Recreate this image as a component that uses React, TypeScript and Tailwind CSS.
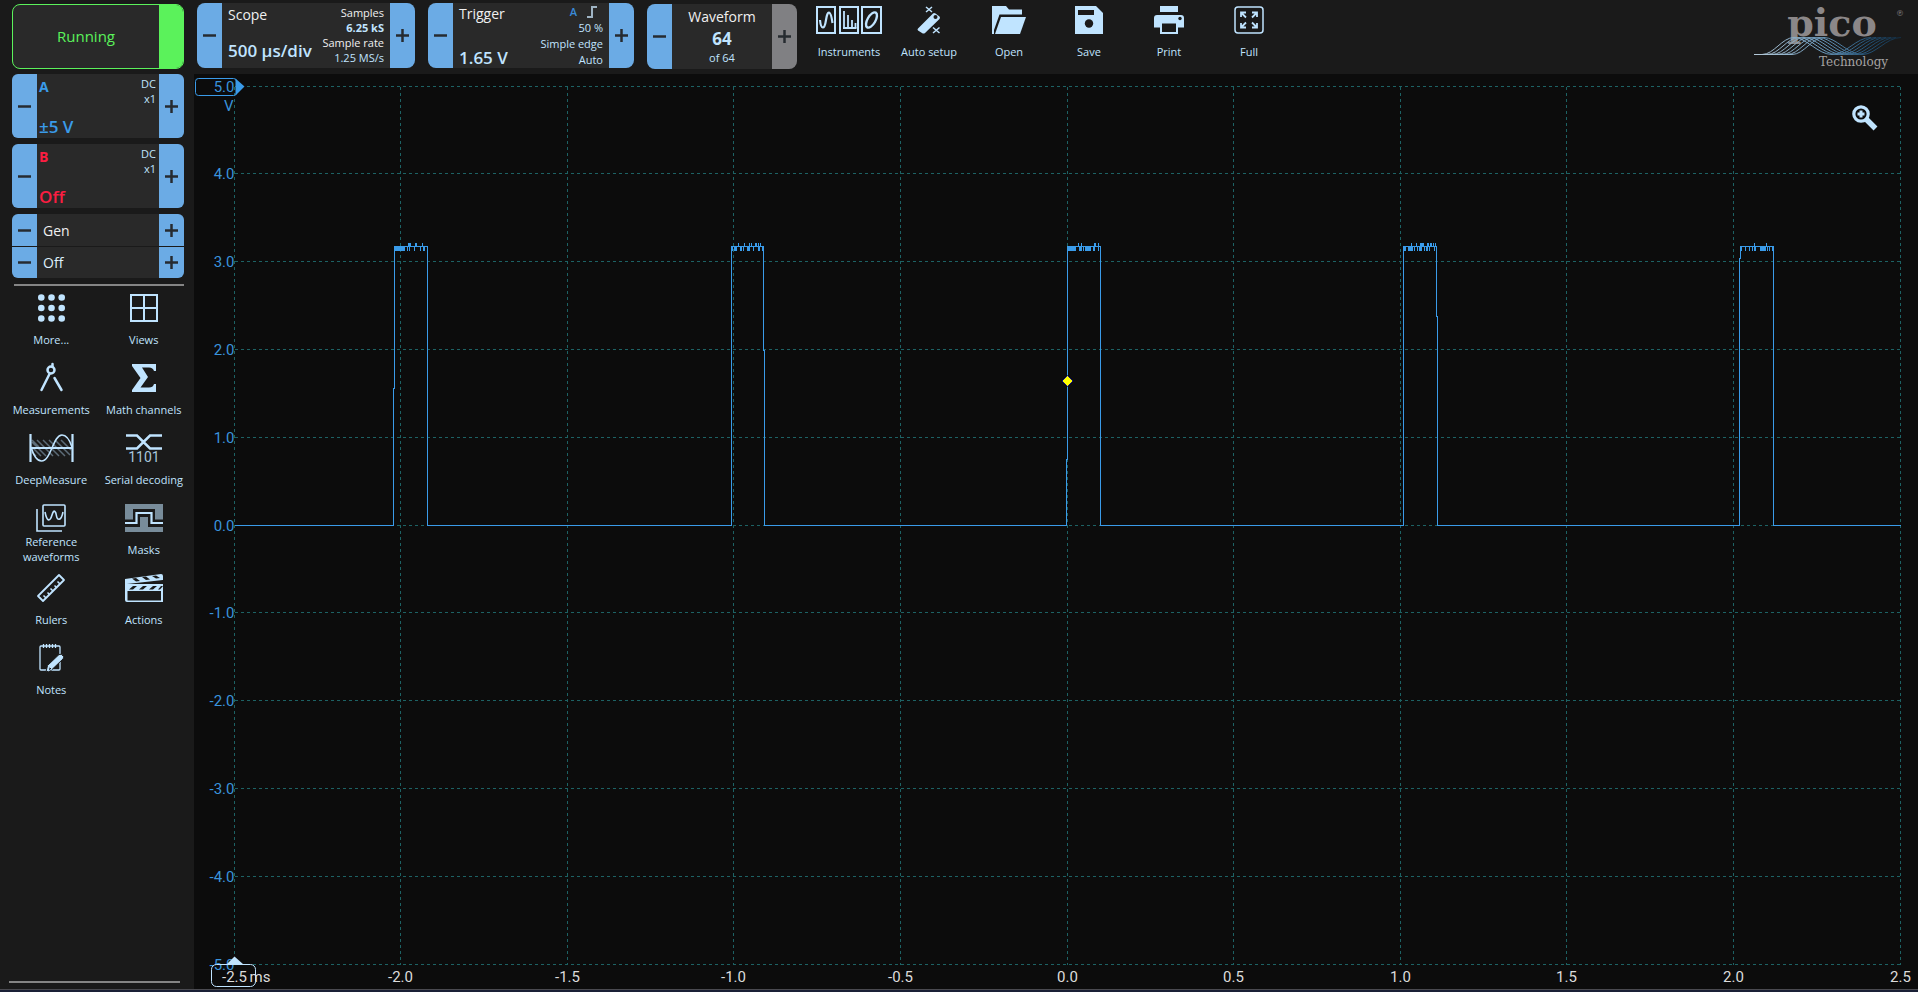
import { useLayoutEffect, useRef, useState } from "react";
import type { ReactNode } from "react";

const ACCENT = "#c0e4ff";
const PANEL = "#1a1a1a";

/* ---------- icons ---------- */

function Icon({ w, children }: { w: number; children: ReactNode }) {
  return (
    <svg
      width={w}
      height={28}
      viewBox={`0 0 ${w} 28`}
      fill="none"
      stroke={ACCENT}
      strokeWidth={2}
      className="overflow-visible"
      aria-hidden="true"
    >
      {children}
    </svg>
  );
}

const InstrumentsIcon = () => (
  <Icon w={66}>
    <rect x="1" y="1" width="18" height="26" />
    <rect x="24" y="1" width="18" height="26" />
    <rect x="46" y="1" width="19" height="26" />
    <path d="M4 14C5 24 8.500 24 10 14S14.500 3 16.500 17" strokeWidth="2.200" />
    <path d="M28 5V22M32 9V22M36 14V22M39.500 17V22" strokeWidth="1.800" />
    <path d="M27 22H40.500" />
    <ellipse cx="55.500" cy="14" rx="4" ry="8.500" transform="rotate(30 55.500 14)" strokeWidth="2.400" />
  </Icon>
);

const AutoSetupIcon = () => (
  <Icon w={24}>
    <path d="M1 22.500 16 7.500Q17 6.500 18.500 7.500L22.500 10.500Q23.500 11.500 22.500 13L8 27Q6.500 28 5 27L1 24.500Q0 23.500 1 22.500z" fill={ACCENT} stroke="none" />
    <circle cx="18.500" cy="11" r="2" fill={PANEL} stroke="none" />
    <path d="M9 1 15 6M15 1 9 6M16 21.500 22.500 27M22.500 21.500 16 27" strokeWidth="1.500" />
  </Icon>
);

const OpenIcon = () => (
  <Icon w={34}>
    <path d="M0 28V0H14L17 3.500H30V8.500H7.500L2 24V28z" fill={ACCENT} stroke="none" />
    <path d="M9 11H34L28 28H3z" fill={ACCENT} stroke="none" />
  </Icon>
);

const SaveIcon = () => (
  <Icon w={28}>
    <path d="M0 0H21L28 7V28H0z" fill={ACCENT} stroke="none" />
    <rect x="3" y="4" width="16" height="5" fill={PANEL} stroke="none" />
    <circle cx="14" cy="17.500" r="4.200" fill={PANEL} stroke="none" />
  </Icon>
);

const PrintIcon = () => (
  <Icon w={30}>
    <rect x="6" y="0" width="18" height="6" fill={ACCENT} stroke="none" />
    <path d="M3 9H27Q30 9 30 12V21.500H24V28H6V21.500H0V12Q0 9 3 9z" fill={ACCENT} stroke="none" />
    <rect x="8" y="17.500" width="14" height="8.500" fill={PANEL} stroke="none" />
    <circle cx="26" cy="12.500" r="1.700" fill={PANEL} stroke="none" />
  </Icon>
);

const FullIcon = () => (
  <Icon w={30}>
    <rect x="1" y="1" width="28" height="26" rx="3" strokeWidth="1.500" />
    <path d="M7 11V6.500H12M7.500 7 12 11.500M18 6.500H23V11M22.500 7 18 11.500M7 17V21.500H12M7.500 21 12 16.500M23 17V21.500H18M22.500 21 18 16.500" strokeWidth="1.800" />
  </Icon>
);

const MoreIcon = () => (
  <Icon w={27}>
    {[3.5, 14, 24.5].map((y) =>
      [3.3, 13.5, 23.7].map((x) => <circle key={`${x}-${y}`} cx={x} cy={y} r="3.300" fill={ACCENT} stroke="none" />)
    )}
  </Icon>
);

const ViewsIcon = () => (
  <Icon w={28}>
    <path d="M1 1H27V27H1zM14 1V27M1 14H27" />
  </Icon>
);

const MeasurementsIcon = () => (
  <Icon w={23}>
    <circle cx="11" cy="6" r="3.500" strokeWidth="2.500" />
    <path d="M12.500 0V3M9.500 10 1.500 26" strokeWidth="2.500" strokeLinecap="round" />
    <path d="M14.500 14 21.500 26" strokeWidth="2.500" strokeLinecap="round" />
  </Icon>
);

const MathIcon = () => (
  <Icon w={24}>
    <path
      d="M0 0H24V7H22Q21 3.500 17 3.500H10L16 13 8.500 23.500H17Q21 23.500 22 20H24V28H0V26L8.500 14 0 2z"
      fill={ACCENT}
      stroke="none"
    />
  </Icon>
);

const DeepMeasureIcon = () => (
  <Icon w={45}>
    <path
      d="M3 6 10 13M8 6 24 22M14 6 30 22M20 6 36 22M3 13 12 22M3 18 7 22M26 6 41 21M3 8 17 22M32 6 42 16"
      stroke="#5c6c78"
      strokeWidth="1.500"
    />
    <path d="M1.500 0V28M43.500 0V28M2 14H43" strokeWidth="2.200" />
    <path d="M2 13C5 23 8 27 12.500 27 22 27 24 1 33 1 38 1 41 7 43 13" strokeWidth="1.600" />
  </Icon>
);

const SerialIcon = () => (
  <Icon w={36}>
    <path d="M0 1.500H11L24 14.500H36M0 14.500H11L24 1.500H36" strokeWidth="2.500" />
    <text x="18" y="28" textAnchor="middle" fill="#a9c6dc" stroke="none" className="font-['Roboto',sans-serif] text-[14px]">
      1101
    </text>
  </Icon>
);

const ReferenceIcon = () => (
  <Icon w={30}>
    <rect x="7" y="1" width="22" height="21" rx="1" strokeWidth="1.600" />
    <path d="M1 5V27H26" strokeWidth="1.600" />
    <path d="M9 8C11 18 14 18 16 11S20 8 20.500 12 25 18 27 8" strokeWidth="1.600" />
  </Icon>
);

const MasksIcon = () => (
  <Icon w={38}>
    <path d="M0 0H38V15.500H30V5H8V15.500H0zM0 28V23H15V13H23V23H38V28z" fill="#788c9a" stroke="none" />
    <path d="M0 19H11.500V9H26.500V19H38" strokeWidth="2.200" />
  </Icon>
);

const RulersIcon = () => (
  <Icon w={28}>
    <path d="M22 1 27 6 6 27 1 22z" strokeWidth="1.800" strokeLinejoin="round" />
    <path d="M9 24 6.500 21.500M12.500 20.500 10.500 18.500M16 17 13.500 14.500M19.500 13.500 17.500 11.500M23 10 20.500 7.500" strokeWidth="1.500" />
  </Icon>
);

const ActionsIcon = () => (
  <Icon w={38}>
    <path d="M0 5 36 0Q38 0 38 2V6L2 10H38V28H2Q0 28 0 26z" fill={ACCENT} stroke="none" />
    <rect x="2.500" y="17" width="33.500" height="9.500" fill={PANEL} stroke="none" />
    <path
      d="M7 4.500 11 4 15 7 11 7.500zM17 3 21 2.500 25 5.500 21 6zM27 2 31 1.500 35 4 31 4.500zM8 12H12L8 15.500H4zM18 12H22L18 15.500H14zM28 12H32L28 15.500H24zM36 12H38L35 15.500H33z"
      fill={PANEL}
      stroke="none"
    />
    <path d="M10 10 38 6.800V9.500H14z" fill={PANEL} stroke="none" />
  </Icon>
);

const NotesIcon = () => (
  <Icon w={25}>
    <rect x="1" y="2" width="20" height="24" rx="1" strokeWidth="1.300" />
    <path d="M4.500 0V4M7.500 0V4M10.500 0V4M13.500 0V4M16.500 0V4" strokeWidth="1.300" />
    <path d="M7 28 8.500 21.500 20 10.500Q22.500 9 24.500 12.500 25 14 24 15L12.500 26z" fill={ACCENT} stroke={PANEL} strokeWidth="1" />
    <path d="M9 27 10.500 22.500 13 25z" fill={PANEL} stroke={ACCENT} strokeWidth="1" />
  </Icon>
);

const ZoomIcon = () => (
  <svg width={26} height={26} viewBox="0 0 26 26" fill="none" stroke={ACCENT} aria-hidden="true">
    <circle cx="9" cy="9" r="7.200" strokeWidth="3.200" />
    <path d="M9 5.500V12.500M5.500 9H12.500" strokeWidth="3" />
    <path d="M14 14 23.500 23.500" strokeWidth="5.500" />
  </svg>
);

const EdgeIcon = () => (
  <svg width={10} height={12} viewBox="0 0 10 12" fill="none" stroke="#9fb4c4" strokeWidth={2} aria-hidden="true">
    <path d="M0 11H5V1H10" />
  </svg>
);

function PicoLogo() {
  return (
    <svg width={152} height={70} viewBox="0 0 152 70" className="overflow-visible" role="img" aria-label="Pico Technology">
      <defs>
        <linearGradient id="wave" gradientUnits="userSpaceOnUse" x1="0" y1="0" x2="150" y2="0">
          <stop offset="0" stopColor="#b5c9d8" />
          <stop offset="0.450" stopColor="#6d9bbd" />
          <stop offset="0.750" stopColor="#25557a" />
          <stop offset="1" stopColor="#10293d" />
        </linearGradient>
      </defs>
      <text x="78" y="33" textAnchor="middle" fill="#8b8788" className="font-['DejaVu_Serif',serif] text-[38px] font-bold">
        pico
      </text>
      <text x="142" y="13" fill="#8b8788" className="font-['DejaVu_Serif',serif] text-[8px]">®</text>
      {[0, 5, 10, 15, 20, 25, 30].map((s) => (
        <path
          key={s}
          d={`M0 51.500H${8 + s}C${20 + s} 51.500 ${28 + s} 34.500 ${40 + s} 34.500S${64 + s} 51.500 ${78 + s} 51.500 ${102 + s} 34.500 ${117 + s} 34.500`}
          fill="none"
          stroke="url(#wave)"
        />
      ))}
      <text x="65" y="63" fill="#a5a3a3" className="font-['DejaVu_Serif',serif] text-[12px]">
        Technology
      </text>
    </svg>
  );
}

/* ---------- controls ---------- */

interface StepButtonProps {
  sign: "plus" | "minus";
  label: string;
  disabled?: boolean;
}

function StepButton({ sign, label, disabled }: StepButtonProps) {
  return (
    <button
      type="button"
      aria-label={label}
      disabled={disabled}
      className={`w-[25px] shrink-0 flex items-center justify-center ${disabled ? "bg-[#808083]" : "bg-[#6babe5]"}`}
    >
      <svg width={13} height={13} viewBox="0 0 13 13" stroke="#262b30" strokeWidth={2.5} aria-hidden="true">
        <path d={sign === "plus" ? "M0 6.500H13M6.500 0V13" : "M0 6.500H13"} />
      </svg>
    </button>
  );
}

function Stepper({ name, className, locked, children }: { name: string; className: string; locked?: boolean; children: ReactNode }) {
  return (
    <div className={`flex overflow-hidden bg-[#292929] ${className}`}>
      <StepButton sign="minus" label={`${name} down`} />
      <div className="flex-1 min-w-0 flex justify-between">{children}</div>
      <StepButton sign="plus" label={`${name} up`} disabled={locked} />
    </div>
  );
}

function Channel({ name, range, color }: { name: string; range: string; color: string }) {
  return (
    <Stepper name={`Channel ${name}`} className="h-16 rounded-md mb-1.5">
      <div className={`flex flex-col justify-between pt-[3px] pb-px pl-0.5 leading-5 ${color}`}>
        <span className="text-[14px] font-bold">{name}</span>
        <span className="text-[17px] font-semibold">{range}</span>
      </div>
      <div className="pt-0.5 pr-[3px] text-right text-[11px] leading-[15px] text-[#c0e4ff]">
        <p>DC</p>
        <p>x1</p>
      </div>
    </Stepper>
  );
}

const tools = [
  { name: "More...", icon: MoreIcon },
  { name: "Views", icon: ViewsIcon },
  { name: "Measurements", icon: MeasurementsIcon },
  { name: "Math channels", icon: MathIcon },
  { name: "DeepMeasure", icon: DeepMeasureIcon },
  { name: "Serial decoding", icon: SerialIcon },
  { name: "Reference waveforms", icon: ReferenceIcon },
  { name: "Masks", icon: MasksIcon },
  { name: "Rulers", icon: RulersIcon },
  { name: "Actions", icon: ActionsIcon },
  { name: "Notes", icon: NotesIcon },
];

function Sidebar() {
  return (
    <aside className="w-[194px] shrink-0 pt-1 pb-1.5 flex flex-col">
      <div className="w-[172px] ml-3">
        <button
          type="button"
          className="w-full h-[65px] mb-[5px] flex overflow-hidden rounded-lg border border-[#5bf25b] bg-[#292929] text-[15px] text-[#5bf25b]"
        >
          <span className="flex-1 self-center">Running</span>
          <span className="w-6 self-stretch bg-[#5bf25b]" />
        </button>

        <Channel name="A" range="±5 V" color="text-[#3a9be9]" />
        <Channel name="B" range="Off" color="text-[#fb1d41]" />

        <div className="mb-1.5 overflow-hidden rounded-md text-[14px] text-[#dff0fc]">
          <Stepper name="Generator" className="h-[33px] border-b border-[#1a1a1a]">
            <span className="self-center pl-1.5 text-[#f0f0f0]">Gen</span>
          </Stepper>
          <Stepper name="Generator output" className="h-[31px]">
            <span className="self-center pl-1.5">Off</span>
          </Stepper>
        </div>
      </div>

      <hr className="ml-3.5 mr-2.5 border-t-2 border-[#858585]" />

      <nav className="grid grid-cols-2 pt-1 pl-[5px] pr-1">
        {tools.map((tool) => {
          const ToolIcon = tool.icon;
          return (
            <button key={tool.name} type="button" className="h-[70px] pt-1 flex flex-col items-center text-[#c0e4ff]">
              <ToolIcon />
              <span className="mt-0.5 h-[30px] flex items-center justify-center text-[11px] leading-[15px]">
                {tool.name}
              </span>
            </button>
          );
        })}
      </nav>

      <hr className="mt-auto ml-[9px] mr-3.5 border-t-2 border-[#858585]" />
    </aside>
  );
}

const actions = [
  { name: "Instruments", icon: InstrumentsIcon },
  { name: "Auto setup", icon: AutoSetupIcon },
  { name: "Open", icon: OpenIcon },
  { name: "Save", icon: SaveIcon },
  { name: "Print", icon: PrintIcon },
  { name: "Full", icon: FullIcon },
];

function Toolbar() {
  return (
    <header className="h-[74px] shrink-0 pt-[3px] pl-[3px] pr-3 flex items-start text-[#c0e4ff]">
      <Stepper name="Timebase" className="w-[218px] h-[65px] rounded-lg">
        <div className="flex flex-col justify-between pt-0.5 pb-[7px] pl-1.5 leading-5 whitespace-nowrap">
          <span className="text-[14px] text-[#f0f0f0]">Scope</span>
          <span className="text-[17px] font-semibold">500 µs/div</span>
        </div>
        <div className="pt-0.5 pr-1.5 text-right text-[11px] leading-[15px] whitespace-nowrap">
          <p className="text-[#f0f0f0]">Samples</p>
          <p className="font-bold">6.25 kS</p>
          <p className="text-[#f0f0f0]">Sample rate</p>
          <p>1.25 MS/s</p>
        </div>
      </Stepper>

      <Stepper name="Trigger level" className="w-[206px] h-[65px] ml-[13px] rounded-lg">
        <div className="flex flex-col justify-between pt-px pl-1.5 leading-5 whitespace-nowrap">
          <span className="text-[14px] text-[#f0f0f0]">Trigger</span>
          <span className="text-[17px] font-semibold">1.65 V</span>
        </div>
        <div className="pt-px pr-1.5 text-right text-[11px] leading-4 whitespace-nowrap">
          <p className="flex items-center justify-end gap-2.5 pr-1.5 font-semibold text-[#3a8ad8]">
            A <EdgeIcon />
          </p>
          <p>50 %</p>
          <p>Simple edge</p>
          <p>Auto</p>
        </div>
      </Stepper>

      <Stepper name="Waveform" className="w-[150px] h-[65px] mt-px ml-[13px] rounded-lg" locked>
        <div className="flex-1 text-center">
          <p className="pt-0.5 text-[14px] leading-[22px] text-[#f0f0f0]">Waveform</p>
          <p className="text-[17px] leading-[22px] font-bold">64</p>
          <p className="text-[11px] leading-4">of 64</p>
        </div>
      </Stepper>

      <nav className="ml-3 pt-[3px] flex">
        {actions.map((action) => {
          const ActionIcon = action.icon;
          return (
            <button key={action.name} type="button" className="w-20 flex flex-col items-center gap-2.5 text-[11px] leading-4">
              <ActionIcon />
              <span>{action.name}</span>
            </button>
          );
        })}
      </nav>

      <div className="ml-auto">
        <PicoLogo />
      </div>
    </header>
  );
}

/* ---------- scope view ---------- */

// times in ms, levels in volts; the step is where a slanted edge moves over by one sample
// noise: d = dip, u = peak, b = both, one character per sample along the top
const pulses = [
  { rise: [-2.021, -2.018], riseStep: 1.55, fall: [-1.919, -1.919], fallStep: 0, noise: "ddddddddddd..dubu...duu...d.udd..." },
  { rise: [-1.01, -1.007], riseStep: 0, fall: [-0.911, -0.908], fallStep: 1.99, noise: "dd.ddd.u.dd.du..ddb.u.d.uu.bdu.d." },
  { rise: [-0.0015, 0.0015], riseStep: 0.75, fall: [0.1005, 0.1005], fallStep: 0, noise: "ddddddddd..uddb.d.dddddd..dbu..b." },
  { rise: [1.01, 1.01], riseStep: 0, fall: [1.109, 1.112], fallStep: 2.37, noise: "ddd..dddbd.d.ud.dbbuud.dbuduu.udu" },
  { rise: [2.018, 2.021], riseStep: 3.03, fall: [2.12, 2.12], fallStep: 0, noise: "dd...d...d..d.bd....ddddddud.d..d" },
];

const HIGH = 3.175;
const DIP = 3.13;
const PEAK = 3.22;
const SAMPLE = 0.003;

const volts = [5, 4, 3, 2, 1, 0, -1, -2, -3, -4, -5];
const times = [-2.5, -2, -1.5, -1, -0.5, 0, 0.5, 1, 1.5, 2, 2.5];

const margin = { left: 40, right: 18, top: 12, bottom: 25 };

function ScopeView() {
  const ref = useRef<HTMLDivElement>(null);
  const [size, setSize] = useState({ w: 0, h: 0 });

  useLayoutEffect(() => {
    const el = ref.current;
    if (!el) return;
    const measure = () => setSize({ w: el.clientWidth, h: el.clientHeight });
    measure();
    const observer = new ResizeObserver(measure);
    observer.observe(el);
    return () => observer.disconnect();
  }, []);

  const plotW = size.w - margin.left - margin.right;
  const plotH = size.h - margin.top - margin.bottom;
  // centre every line on a pixel so it stays one pixel wide
  const snap = (n: number) => Math.floor(n + 0.01) + 0.5;
  const x = (t: number) => snap(margin.left + ((t + 2.5) / 5) * plotW);
  const y = (v: number) => snap(margin.top + ((5 - v) / 10) * plotH);

  const trace =
    `M${x(-2.5)} ${y(0)}` +
    pulses
      .map(
        (p) =>
          `H${x(p.rise[0])}V${y(p.riseStep)}H${x(p.rise[1])}V${y(HIGH)}` +
          `H${x(p.fall[0])}V${y(p.fallStep)}H${x(p.fall[1])}V${y(0)}`
      )
      .join("") +
    `H${x(2.5)}`;

  const noise = pulses
    .map((p) =>
      p.noise
        .split("")
        .map((c, i) => {
          if (c === ".") return "";
          const from = c === "d" ? HIGH : PEAK;
          const to = c === "u" ? HIGH : DIP;
          return `M${x(p.rise[1] + i * SAMPLE)} ${y(from)}V${y(to)}`;
        })
        .join("")
    )
    .join("");

  const left = x(-2.5);
  const top = y(5);
  const bottom = y(-5);

  return (
    <main ref={ref} className="relative flex-1 min-h-0 overflow-hidden bg-[#0c0c0c]">
      {size.w > 0 && (
        <svg width={size.w} height={size.h} className="block font-['Roboto',sans-serif] text-[15px]">
          <g stroke="#1d6264" strokeDasharray="3 3" shapeRendering="crispEdges">
            {volts.map((v) => (
              <line key={v} x1={left} x2={x(2.5)} y1={y(v)} y2={y(v)} />
            ))}
            {times.map((t) => (
              <line key={t} x1={x(t)} x2={x(t)} y1={top} y2={bottom} />
            ))}
          </g>

          <g fill="#3a93dc" textAnchor="end">
            {volts.map((v) => (
              <text key={v} x={left} y={y(v) + 5}>
                {v.toFixed(1)}
              </text>
            ))}
            <text x={left - 1} y={top + 24}>V</text>
          </g>

          <g fill="#dcdcdc" textAnchor="middle">
            {times.map((t) => (
              <text key={t} x={x(t)} y={bottom + 17}>
                {t.toFixed(1)}
              </text>
            ))}
            <text x={left + 15} y={bottom + 17} textAnchor="start">ms</text>
          </g>

          <g fill="none" stroke="#3a9be9" shapeRendering="crispEdges">
            <path d={trace} />
            <path d={noise} />
          </g>

          {/* trigger point */}
          <path d={`M${x(0)} ${y(1.65) - 5}l5.500 5.500l-5.500 5.500l-5.500 -5.500z`} fill="#ffff00" stroke="#0a0a80" />

          {/* axis handles */}
          <rect x={left - 39} y={top - 8} width={41} height={17} rx={3} fill="none" stroke="#3a9be9" />
          <path d={`M${left + 1} ${top - 8}L${left + 10} ${top}L${left + 1} ${top + 9}z`} fill="#3a9be9" />
          <rect x={left - 23} y={bottom} width={44} height={22} rx={5} fill="none" stroke={ACCENT} />
          <path d={`M${left - 8} ${bottom}L${left} ${bottom - 8}L${left + 9} ${bottom}z`} fill={ACCENT} />
        </svg>
      )}

      <button type="button" aria-label="Zoom" className="absolute top-[31px] right-10">
        <ZoomIcon />
      </button>
    </main>
  );
}

export default function App() {
  return (
    <div className="h-screen flex flex-col bg-[#1a1a1a] font-['Open_Sans','Noto_Sans',sans-serif]">
      <div className="flex-1 min-h-0 flex">
        <Sidebar />
        <div className="flex-1 min-w-0 flex flex-col">
          <Toolbar />
          <ScopeView />
        </div>
      </div>
      <div className="h-[3px] shrink-0 border-t border-[#4a4a50] bg-[#1a2036]" />
    </div>
  );
}
